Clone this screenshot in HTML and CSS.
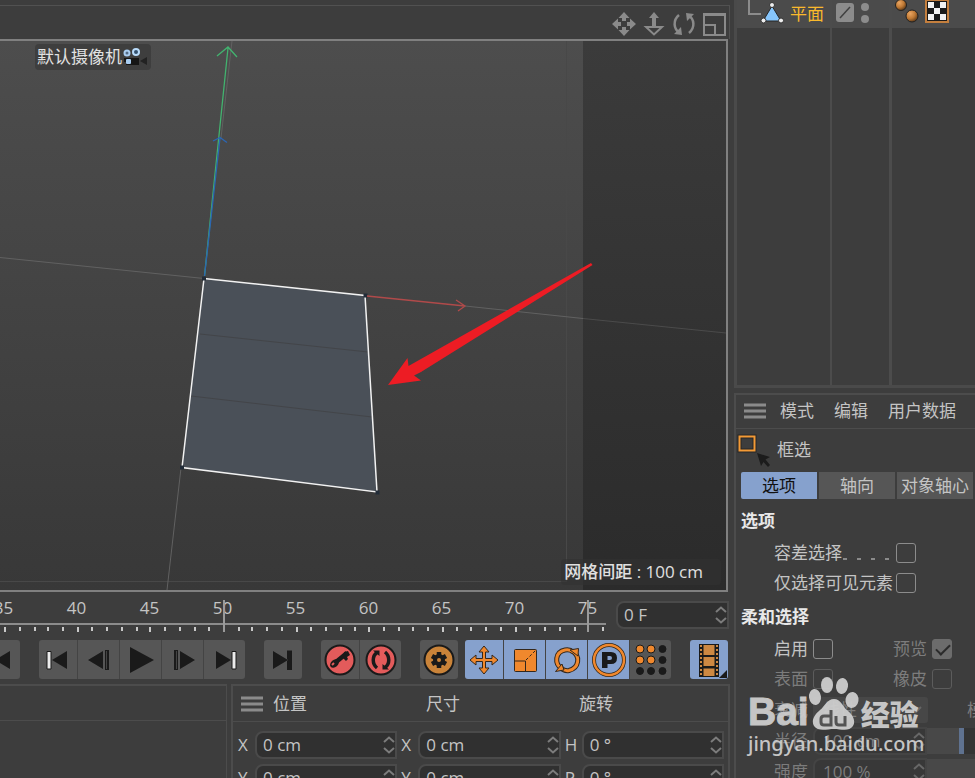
FILE: index.html
```html
<!DOCTYPE html>
<html lang="zh-CN">
<head>
<meta charset="utf-8">
<title>平面</title>
<link rel="stylesheet" href="styles.css">
</head>
<body>
<svg class="defs" aria-hidden="true">
  <symbol id="spin" viewBox="0 0 12 18"><path d="M1 6L6 1.500L11 6M1 12L6 16.500L11 12" fill="none" stroke="#7c7c7c" stroke-width="2"/></symbol>
  <symbol id="menu" viewBox="0 0 22 16"><path d="M0 2H22M0 8H22M0 14H22" stroke="#8b8b8b" stroke-width="3"/></symbol>
</svg>
<div class="app">
  <main class="left">
    <div class="viewbar">
      <button aria-label="平移"><svg viewBox="0 0 24 24"><path d="M12 0L17.500 6H14V10H10V6H6.500ZM12 24L17.500 18H14V14H10V18H6.500ZM0 12L6 6.500V10H10V14H6V17.500ZM24 12L18 6.500V10H14V14H18V17.500Z" fill="#8a8a8a"/><rect x="9" y="9" width="6" height="6" fill="#3d3d3d"/></svg></button>
      <button aria-label="缩放"><svg viewBox="0 0 24 24"><path d="M12 0L17 6H14V14H10V6H7Z" fill="#8a8a8a"/><path d="M4 15H20L12 22.500Z" fill="none" stroke="#8a8a8a" stroke-width="2"/></svg></button>
      <button aria-label="旋转视图"><svg viewBox="0 0 24 24"><path d="M8 21C1 17 1 8 7 3M16 3C23 7 23 16 17 21" fill="none" stroke="#8a8a8a" stroke-width="2.500"/><path d="M2 22L10 23L9 15ZM22 2L14 1L15 9Z" fill="#8a8a8a"/></svg></button>
      <button aria-label="切换视图"><svg viewBox="0 0 24 24"><path d="M2 2H23V23H2ZM2 13H13V23" fill="none" stroke="#8a8a8a" stroke-width="2"/><path d="M2 2.500H23" stroke="#8a8a8a" stroke-width="3"/></svg></button>
    </div>

    <section class="viewport">
      <svg class="scene" viewBox="0 41 726 549" preserveAspectRatio="xMinYMin slice" aria-hidden="true">
        <defs>
          <linearGradient id="bg" x1="0" y1="0" x2="0" y2="1"><stop offset="0" stop-color="#4d4d4d"/><stop offset="1" stop-color="#383838"/></linearGradient>
          <linearGradient id="bg2" x1="0" y1="0" x2="0" y2="1"><stop offset="0" stop-color="#3b3b3b"/><stop offset="1" stop-color="#2b2b2b"/></linearGradient>
        </defs>
        <rect x="0" y="41" width="583" height="549" fill="url(#bg)"/>
        <rect x="583" y="41" width="400" height="549" fill="url(#bg2)"/>
        <path d="M566.500 41V581.500H0" fill="none" stroke="#484848"/>
        <path d="M0 257.500L204 278.500M465 306L583 318.500M181 468L167 590M232 41L221 138" fill="none" stroke="#616161"/>
        <path d="M583 318.500L726 333" stroke="#4b4b4b"/>
        <path d="M204 278.500L365 295.500L377 492L182 467.500Z" fill="#4a5058"/>
        <path d="M200 334L368 352M191 396L372 417" stroke="#434549"/>
        <path d="M204 278.500L365 295.500L377 492L182 467.500Z" fill="none" stroke="#f2f2f2" stroke-width="1.500"/>
        <path d="M202 276.500h4v4h-4ZM363.500 293.500h4v4h-4ZM375.500 490.500h4v4h-4ZM180 465.500h4v4h-4Z" fill="#222c38"/>
        <path d="M204.500 276L228 48M217 56L228 47L237 57" fill="none" stroke="#42b36f" stroke-width="1.300"/>
        <path d="M204.500 276L220 138M213 141L220 137.500L227 142.500" fill="none" stroke="#2b66b3" stroke-width="1.300"/>
        <path d="M367 296L465 306M456 300L465 306L458 311" fill="none" stroke="#b04a4a" stroke-width="1.300"/>
        <path d="M591 263L592.500 265L421 372L414 375.500L421 380.500L388 385L407.500 358L408.500 366Z" fill="#ed1c24"/>
      </svg>
      <div class="camera">默认摄像机<svg viewBox="0 0 26 20"><path d="M1 11H16V18H3V15H1Z" fill="#161616"/><path d="M17 14L24 10V18Z" fill="#222"/><circle cx="4" cy="6" r="2.500" fill="#536b85" stroke="#a9cdf0" stroke-width="2"/><circle cx="13" cy="5" r="3" fill="#34516e" stroke="#b8dbfa" stroke-width="2"/><rect x="3" y="12" width="5" height="5" rx="1" fill="#a9cdf0"/></svg></div>
      <div class="spacing">网格间距 : 100 cm</div>
    </section>

    <div class="timeline">
      <div class="ruler">
        <div class="frames"><span>35</span><span>40</span><span>45</span><span>50</span><span>55</span><span>60</span><span>65</span><span>70</span><span>75</span></div>
        <svg class="ticks" viewBox="0 0 606 44" preserveAspectRatio="xMinYMin slice" aria-hidden="true">
          <path d="M0 32H606" stroke="#8c8c8c" stroke-width="2"/>
          <path d="M20 35v4M35 35v4M48 35v4M63 35v4M92 35v4M107 35v4M122 35v4M137 35v4M165 35v4M180 35v4M195 35v4M209 35v4M239 35v4M252 35v4M267 35v4M282 35v4M311 35v4M326 35v4M341 35v4M355 35v4M384 35v4M399 35v4M413 35v4M428 35v4M457 35v4M471 35v4M486 35v4M501 35v4M530 35v4M545 35v4M560 35v4M575 35v4M603 35v4M5 35v5M78 35v5M150 35v5M297 35v5M369 35v5M443 35v5M516 35v5" stroke="#c8c8c8" stroke-width="2"/>
          <path d="M224 8V40M588 8V40" stroke="#9a9a9a" stroke-width="2"/>
        </svg>
      </div>
      <div class="field frame"><input aria-label="当前帧" value="0 F"><svg><use href="#spin"/></svg></div>
    </div>

    <div class="transport">
      <div class="group cut"><button aria-label="上一关键帧"><svg viewBox="0 0 36 36"><path d="M27 9V27L12 18Z"/></svg></button></div>
      <div class="group">
        <button aria-label="转到开始"><svg viewBox="0 0 36 36"><path d="M27 9V27L12 18Z"/><path d="M7 9.500h4v17.500h-4Z" fill="#ececec" stroke="#1a1a1a"/></svg></button>
        <button aria-label="上一帧"><svg viewBox="0 0 36 36"><path d="M22 9V27L7 18ZM24 8h4v20h-4Z"/><path d="M25.500 9V27" stroke="#444"/></svg></button>
        <button aria-label="播放"><svg viewBox="0 0 36 36"><path d="M7 5L31 18L7 31Z"/></svg></button>
        <button aria-label="下一帧"><svg viewBox="0 0 36 36"><path d="M15 9V27L30 18ZM9 8h4v20h-4Z"/><path d="M11.500 9V27" stroke="#444"/></svg></button>
        <button aria-label="转到结束"><svg viewBox="0 0 36 36"><path d="M9 9V27L24 18Z"/><path d="M25 9.500h4v17.500h-4Z" fill="#ececec" stroke="#1a1a1a"/></svg></button>
      </div>
      <div class="group"><button aria-label="下一关键帧"><svg viewBox="0 0 36 36"><path d="M8 9V27L23 18ZM22 8.500h5v19.500h-5Z"/></svg></button></div>
      <div class="group">
        <button aria-label="记录关键帧"><svg viewBox="0 0 36 36"><circle cx="18" cy="18" r="14.500" fill="#e35b5b" stroke="#1a1a1a" stroke-width="2"/><path d="M14 20L25 11" stroke="#1a1a1a" stroke-width="4.500"/><ellipse cx="12.500" cy="21.500" rx="5" ry="3.500" transform="rotate(-40 12.500 21.500)"/><path d="M21 16L24 19L26 17L25 15L28 13L26 9L22 10Z"/><path d="M10 23L12 21" stroke="#e35b5b" stroke-width="2"/></svg></button>
        <button aria-label="自动关键帧"><svg viewBox="0 0 36 36"><circle cx="18" cy="18" r="14.500" fill="#e35b5b" stroke="#1a1a1a" stroke-width="2"/><path d="M14 10.500C9 14 9 22 14 26M22 10C27 14 27 22 22 25.500" fill="none" stroke="#1a1a1a" stroke-width="3.500"/><path d="M10 8.500H16.500V14ZM26 27.500H19.500V22Z"/></svg></button>
      </div>
      <div class="modes">
        <div class="group"><button aria-label="关键帧选项"><svg viewBox="0 0 36 36"><circle cx="18" cy="18" r="14.500" fill="#c98339" stroke="#1a1a1a" stroke-width="2"/><path d="M18 10V26M11 14L25 22M25 14L11 22" stroke="#1a1a1a" stroke-width="4.500"/><circle cx="18" cy="18" r="4" fill="#c98339" stroke="#1a1a1a" stroke-width="4"/></svg></button></div>
        <div class="group">
          <button class="on" aria-label="位置"><svg viewBox="0 0 36 36"><path d="M18 4L23 10H19.500V16.500H26V13L32 18L26 23V19.500H19.500V26H23L18 32L13 26H16.500V19.500H10V23L4 18L10 13V16.500H16.500V10H13Z" fill="#f0882d" stroke="#33271c"/></svg></button>
          <button class="on" aria-label="缩放"><svg viewBox="0 0 36 36"><rect x="7.500" y="7.500" width="22" height="22" rx="1" fill="#f0882d" stroke="#33271c"/><path d="M8 19H18.500V29" fill="none" stroke="#33271c"/><path d="M19 18L29 8" stroke="#33271c" stroke-dasharray="3 2"/></svg></button>
          <button class="on" aria-label="旋转"><svg viewBox="0 0 36 36"><g fill="none"><path d="M13 27C5 22 6 10 16 8C19 7.500 22 8 24 10M23 9C32 14 30 26 20 28.500C17 29 14 28 12 26" stroke="#33271c" stroke-width="5"/><path d="M13 27C5 22 6 10 16 8C19 7.500 22 8 24 10M23 9C32 14 30 26 20 28.500C17 29 14 28 12 26" stroke="#f0882d" stroke-width="3"/></g><path d="M21 8L29.500 6.500L29 14ZM15 28L6.500 29.500L13 22Z" fill="#f0882d" stroke="#33271c"/></svg></button>
          <button class="on" aria-label="参数"><svg viewBox="0 0 36 36"><circle cx="18" cy="18" r="15" fill="none" stroke="#33271c" stroke-width="4"/><circle cx="18" cy="18" r="15" fill="none" stroke="#f0882d" stroke-width="2.500"/><path fill-rule="evenodd" d="M11 10H20Q26 10 26 16Q26 22 20 22H16.500V26H11ZM16.500 14V18H19Q21 18 21 16Q21 14 19 14Z"/></svg></button>
          <button aria-label="点级别动画"><svg viewBox="0 0 36 36"><g stroke="#1a1a1a"><g fill="#f0882d"><circle cx="7" cy="7" r="4"/><circle cx="18" cy="7" r="4"/><circle cx="7" cy="18" r="4"/><circle cx="18" cy="18" r="4"/></g><circle cx="29.500" cy="7" r="3.500"/><circle cx="29.500" cy="18" r="3.500"/><circle cx="7" cy="29" r="3.500"/><circle cx="18" cy="29" r="3.500"/><circle cx="29.500" cy="29" r="3.500"/></g></svg></button>
        </div>
      </div>
      <div class="group"><button class="on film" aria-label="时间线"><svg viewBox="0 0 36 36"><rect x="8" y="2" width="20" height="33" fill="#1a1a1a"/><path d="M12.500 3h11v10h-11ZM12.500 15h11v9h-11ZM12.500 26.500h11v7.500h-11Z" fill="#cd8842"/><path d="M10 3V34M26 3V34" stroke="#cd8842" stroke-width="2" stroke-dasharray="2 2"/><path d="M36 28V36H28Z"/></svg></button></div>
    </div>

    <div class="bottom">
      <section class="materials"></section>
      <section class="coords">
        <header><button aria-label="菜单"><svg class="menu"><use href="#menu"/></svg></button><span>位置</span><span>尺寸</span><span>旋转</span></header>
        <div class="values">
          <label for="px">X</label><div class="field"><input id="px" value="0 cm"><svg><use href="#spin"/></svg></div>
          <label for="sx">X</label><div class="field"><input id="sx" value="0 cm"><svg><use href="#spin"/></svg></div>
          <label for="rh">H</label><div class="field"><input id="rh" value="0 °"><svg><use href="#spin"/></svg></div>
          <label for="py">Y</label><div class="field"><input id="py" value="0 cm"><svg><use href="#spin"/></svg></div>
          <label for="sy">Y</label><div class="field"><input id="sy" value="0 cm"><svg><use href="#spin"/></svg></div>
          <label for="rp">P</label><div class="field"><input id="rp" value="0 °"><svg><use href="#spin"/></svg></div>
        </div>
      </section>
    </div>
  </main>

  <aside class="right">
    <section class="objects">
      <div class="col name">
        <div class="cell"><svg class="tree" viewBox="0 0 50 28"><path d="M12 0V14H24" fill="none" stroke="#8c8c8c" stroke-width="2"/><path d="M35 6L44 21H26Z" fill="#86c5fb" stroke="#262626"/><g fill="#eee" stroke="#333"><circle cx="35" cy="5" r="2.500"/><circle cx="26.500" cy="20.500" r="2.500"/><circle cx="44" cy="20.500" r="2.500"/></g></svg><span>平面</span></div>
      </div>
      <div class="col flags">
        <div class="cell"><svg viewBox="0 0 57 28"><rect x="4" y="3" width="18" height="19" rx="3" fill="#8c8c8c"/><path d="M8 18L18 7" stroke="#404040" stroke-width="1.500"/><circle cx="33" cy="7" r="4" fill="#8c8c8c"/><circle cx="33" cy="19" r="4" fill="#8c8c8c"/></svg></div>
      </div>
      <div class="col tags">
        <div class="cell"><svg viewBox="0 0 60 28"><defs><radialGradient id="ball" cx=".35" cy=".3" r=".8"><stop offset="0" stop-color="#e9a562"/><stop offset=".5" stop-color="#c07a35"/><stop offset="1" stop-color="#4a2c10"/></radialGradient></defs><circle cx="7" cy="5" r="5.500" fill="url(#ball)" stroke="#222"/><circle cx="18" cy="16" r="6" fill="url(#ball)" stroke="#222"/><rect x="32" y="0" width="22" height="22" fill="#1a1a1a" stroke="#c47f3e" stroke-width="2"/><path d="M34 2h6v6h-6ZM46 2h6v6h-6ZM40 8h6v6h-6ZM34 14h6v6h-6ZM46 14h6v6h-6Z" fill="#f2f2f2"/></svg></div>
      </div>
    </section>

    <section class="attrs">
      <nav><button aria-label="菜单"><svg class="menu"><use href="#menu"/></svg></button><button>模式</button><button>编辑</button><button>用户数据</button></nav>
      <div class="tool"><svg viewBox="0 0 36 36"><rect x="2.500" y="4.500" width="15" height="14" fill="none" stroke="#262626" stroke-width="4"/><rect x="2.500" y="4.500" width="15" height="14" fill="none" stroke="#f39a36" stroke-width="2"/><path d="M20 21L33 25L28.500 27.500L33 33L31 35L26.500 30L24 34Z" fill="#1c1c1c"/></svg><span>框选</span></div>
      <div class="tabs"><button class="sel">选项</button><button>轴向</button><button>对象轴心</button></div>
      <h2>选项</h2>
      <div class="row"><label class="wide" for="tol">容差选择<i class="leader"></i></label><input type="checkbox" id="tol"></div>
      <div class="row"><label class="wide" for="vis">仅选择可见元素</label><input type="checkbox" id="vis"></div>
      <h2>柔和选择</h2>
      <div class="row"><label for="en">启用</label><input type="checkbox" id="en"><label class="second dim" for="pre">预览</label><input type="checkbox" class="solid" id="pre" checked></div>
      <div class="row dim"><label for="sur">表面</label><input type="checkbox" id="sur"><label class="second" for="rub">橡皮</label><input type="checkbox" id="rub"></div>
      <div class="row dim"><label for="fall">衰减</label><div class="pick"><select id="fall"><option>线性</option></select><svg viewBox="0 0 12 8"><path d="M1 1L6 6L11 1" fill="none" stroke="#666" stroke-width="2"/></svg></div><span class="far">模</span></div>
      <div class="row dim"><label for="rad">半径</label><div class="field"><input id="rad" value="100 cm"><svg><use href="#spin"/></svg></div><div class="slide"><i></i></div></div>
      <div class="row dim"><label for="str">强度</label><div class="field"><input id="str" value="100 %"><svg><use href="#spin"/></svg></div><div class="slide full"></div></div>
    </section>
  </aside>
</div>

<div class="mark">
  <div class="logo"><b class="bai">Bai</b><svg viewBox="0 0 54 56"><g fill="#d0d0d0"><ellipse cx="8" cy="22" rx="6" ry="8" transform="rotate(-8 8 22)"/><ellipse cx="20" cy="10" rx="6" ry="8"/><ellipse cx="35" cy="11" rx="6" ry="8" transform="rotate(8 35 11)"/><ellipse cx="45" cy="25" rx="6.500" ry="8" transform="rotate(8 45 25)"/><path d="M27 24C34 24 35 31 40 35C46 40 49 46 46 51C42 57 34 54 27 54C20 54 11 57 7 51C4 46 7 40 13 35C18 31 20 24 27 24Z"/></g><path d="M24 35V50H17Q14 50 14 47V44Q14 41 17 41H24M29 41V47Q29 50 32 50H38V41" fill="none" stroke="#555" stroke-width="3"/></svg><b class="jy">经验</b></div>
  <div class="url">jingyan.baidu.com</div>
</div>
</body>
</html>
```
FILE: styles.css
```css
* { box-sizing: border-box; }

html, body { height: 100%; }

body {
  margin: 0;
  overflow: hidden;
  background: #3d3d3d;
  color: #c4c4c4;
  font: 17px/24px "Open Sans", "Noto Sans CJK SC", sans-serif;
}

button, input, select { font: inherit; color: inherit; }
button { margin: 0; padding: 0; border: 0; background: none; }
svg { display: block; flex: none; }
.defs { position: absolute; width: 0; height: 0; }

.app {
  display: grid;
  grid-template-columns: minmax(0, 1fr) 241px;
  column-gap: 4px;
  height: 100vh;
}

/* left side */
.left { display: flex; flex-direction: column; min-width: 0; min-height: 0; }

.viewbar {
  display: flex;
  justify-content: flex-end;
  align-items: center;
  gap: 6px;
  height: 34px;
  margin-top: 5px;
  padding: 3px 3px 0 0;
  border-top: 1px solid #515151;
  border-right: 1px solid #515151;
}
.viewbar svg { width: 24px; height: 24px; }

.viewport {
  position: relative;
  flex: 1;
  min-height: 0;
  margin-right: 2px;
  border: solid #808080;
  border-width: 2px 2px 2px 0;
  overflow: hidden;
}
.scene { width: 100%; height: 100%; }

.camera, .spacing { position: absolute; border-radius: 4px; }
.camera {
  top: 3px;
  left: 35px;
  display: flex;
  align-items: center;
  padding: 1px 2px;
  background: #3e3e3e;
  color: #e2e2e2;
}
.camera svg { width: 26px; height: 20px; margin-left: 1px; }
.spacing {
  right: 5px;
  bottom: 5px;
  padding: 1px 18px 1px 3px;
  background: rgba(50, 50, 50, .6);
  color: #e0e0e0;
  font-weight: 500;
}

.timeline { display: flex; height: 48px; padding-right: 1px; }
.ruler { position: relative; flex: 1; overflow: hidden; }
.frames { display: grid; grid-template-columns: repeat(9, 73px); margin-left: -33px; padding-top: 4px; text-align: center; }
.ticks { position: absolute; top: 0; left: 0; width: 606px; height: 44px; }

.field {
  display: flex;
  align-items: center;
  min-width: 0;
  height: 28px;
  border: 2px solid #4a4a4a;
  border-radius: 8px 0 0 8px;
  background: #303030;
}
.field input {
  flex: 1;
  min-width: 0;
  width: 0;
  height: 24px;
  padding: 0 0 0 6px;
  border: 0;
  background: none;
}
.field svg { width: 12px; height: 18px; }
.frame { width: 113px; margin-top: 9px; }

.transport { display: flex; gap: 19px; height: 44px; }
.modes { display: flex; gap: 7px; }
.group { display: flex; height: 39px; border-radius: 3px; overflow: hidden; background: #565656; }
.group button {
  display: grid;
  place-items: center;
  width: 42px;
  height: 39px;
  border-left: 1px solid #444;
}
.group button:first-child { width: 38px; border-left: 0; }
.group svg { width: 36px; height: 36px; fill: #1a1a1a; }
.group .on { background: #86a1cd; }
.cut { margin-left: -18px; }

.bottom { display: flex; gap: 4px; height: 94px; overflow: hidden; }
.materials { width: 227px; border: solid #4c4c4c; border-width: 2px 1px 0 0; }
.materials::before { content: ""; display: block; height: 34px; border-bottom: 1px solid #4c4c4c; }
.coords { flex: 1; min-width: 0; border: solid #4c4c4c; border-width: 2px 2px 0; }
.coords header {
  display: grid;
  grid-template-columns: 32px repeat(3, 153px);
  align-items: center;
  height: 36px;
  padding-left: 8px;
  border-bottom: 1px solid #4c4c4c;
}
.menu { width: 22px; height: 16px; }
.values {
  display: grid;
  grid-template-columns: repeat(3, 17px minmax(0, 1fr) 4px);
  row-gap: 5px;
  padding: 9px 0 0 5px;
}
.values label { line-height: 28px; }
.values label:nth-of-type(3n + 1) { grid-column: 1; }
.values label:nth-of-type(3n + 2) { grid-column: 4; }
.values label:nth-of-type(3n) { grid-column: 7; }

/* right side */
.right { display: flex; flex-direction: column; gap: 5px; min-width: 0; overflow: hidden; }

.objects {
  display: grid;
  grid-template-columns: 95px 60px minmax(0, 1fr);
  flex: 0 0 388px;
  border: solid #4a4a4a;
  border-width: 0 0 3px 3px;
}
.name { border-right: 2px solid #4c4c4c; }
.flags { border-right: 3px solid #4c4c4c; }
.cell { display: flex; align-items: center; height: 28px; background: #4b4b4b; overflow: hidden; }
.name .cell { padding-bottom: 1px; }
.cell svg { height: 28px; }
.cell span { margin-left: 3px; color: #f9b92c; }
.tags .cell { padding-left: 2px; }
.tree { width: 50px; }

.attrs { flex: 1; min-height: 0; border: solid #4c4c4c; border-width: 2px 0 0 2px; overflow: hidden; }
.attrs nav { display: flex; align-items: center; gap: 20px; height: 34px; padding: 0 0 2px 8px; border-bottom: 1px solid #4c4c4c; }
.attrs nav button:first-child { margin-right: -6px; }
.tool { display: flex; align-items: center; gap: 4px; height: 43px; padding: 0 0 2px 1px; }
.tool svg { width: 36px; height: 36px; }
.tabs { display: grid; grid-template-columns: repeat(3, minmax(0, 1fr)); gap: 2px; margin: 0 2px 3px 5px; }
.tabs button { height: 27px; background: #565656; line-height: 24px; white-space: nowrap; }
.tabs .sel { background: #86a1cd; color: #111; border-radius: 2px 0 0 2px; }
h2 { height: 36px; margin: 0; padding: 7px 0 0 5px; color: #e8e8e8; font-size: 17px; line-height: 24px; font-weight: 700; }
.row { display: flex; align-items: center; height: 31px; padding-left: 38px; white-space: nowrap; }
.row:has([type="checkbox"]) { height: 30px; }
.row label { display: flex; width: 39px; flex: none; }
.row .wide { width: 122px; }
.row .second { margin-left: 60px; }
.dim { color: #7c7c7c; }
.leader { flex: 1; height: 2px; margin: 17px 4px 0 1px; background: repeating-linear-gradient(90deg, #8a8a8a 0 4px, transparent 4px 14px); }

input[type="checkbox"] {
  appearance: none;
  flex: none;
  width: 20px;
  height: 20px;
  margin: 0;
  border: 1px solid #8c8c8c;
  border-radius: 3px;
}
.dim input[type="checkbox"] { border-color: #5c5c5c; }
input.solid { background: #6c6c6c; border-color: #6c6c6c; }
input.solid::after {
  content: "";
  display: block;
  width: 12px;
  height: 6px;
  margin: 4px 0 0 3px;
  border: solid #2b2b2b;
  border-width: 0 0 2px 2px;
  transform: rotate(-45deg);
}

.pick { display: flex; align-items: center; flex: none; width: 115px; height: 26px; border-radius: 3px; background: #474747; }
.pick select { appearance: none; flex: 1; min-width: 0; padding: 0 0 0 10px; border: 0; background: none; }
.pick svg { width: 12px; height: 8px; margin-right: 6px; }
.far { margin-left: 39px; }
.row .field { flex: none; width: 114px; border-color: #444; background: #383838; }
.row .field input { padding-left: 8px; }
.row .field svg { opacity: .7; }
.slide { flex: 1; height: 26px; background: linear-gradient(90deg, #484848 33px, #343434 33px); }
.slide i { display: block; width: 5px; height: 26px; margin-left: 32px; background: #5f7290; }
.slide.full { background: #484848; }

/* watermark */
.mark { position: absolute; right: 53px; bottom: 21px; width: 174px; color: #d0d0d0; opacity: .93; }
.logo { display: flex; align-items: flex-end; height: 56px; white-space: nowrap; }
.logo svg { width: 54px; height: 56px; margin-left: -2px; }
.bai { font: 700 39px/38px "Liberation Sans", sans-serif; -webkit-text-stroke: 1px #d0d0d0; }
.jy { margin-bottom: 2px; font: 900 29px/32px "Noto Sans CJK SC", sans-serif; }
.url { font: 500 20px/26px "Noto Sans", sans-serif; }
```
